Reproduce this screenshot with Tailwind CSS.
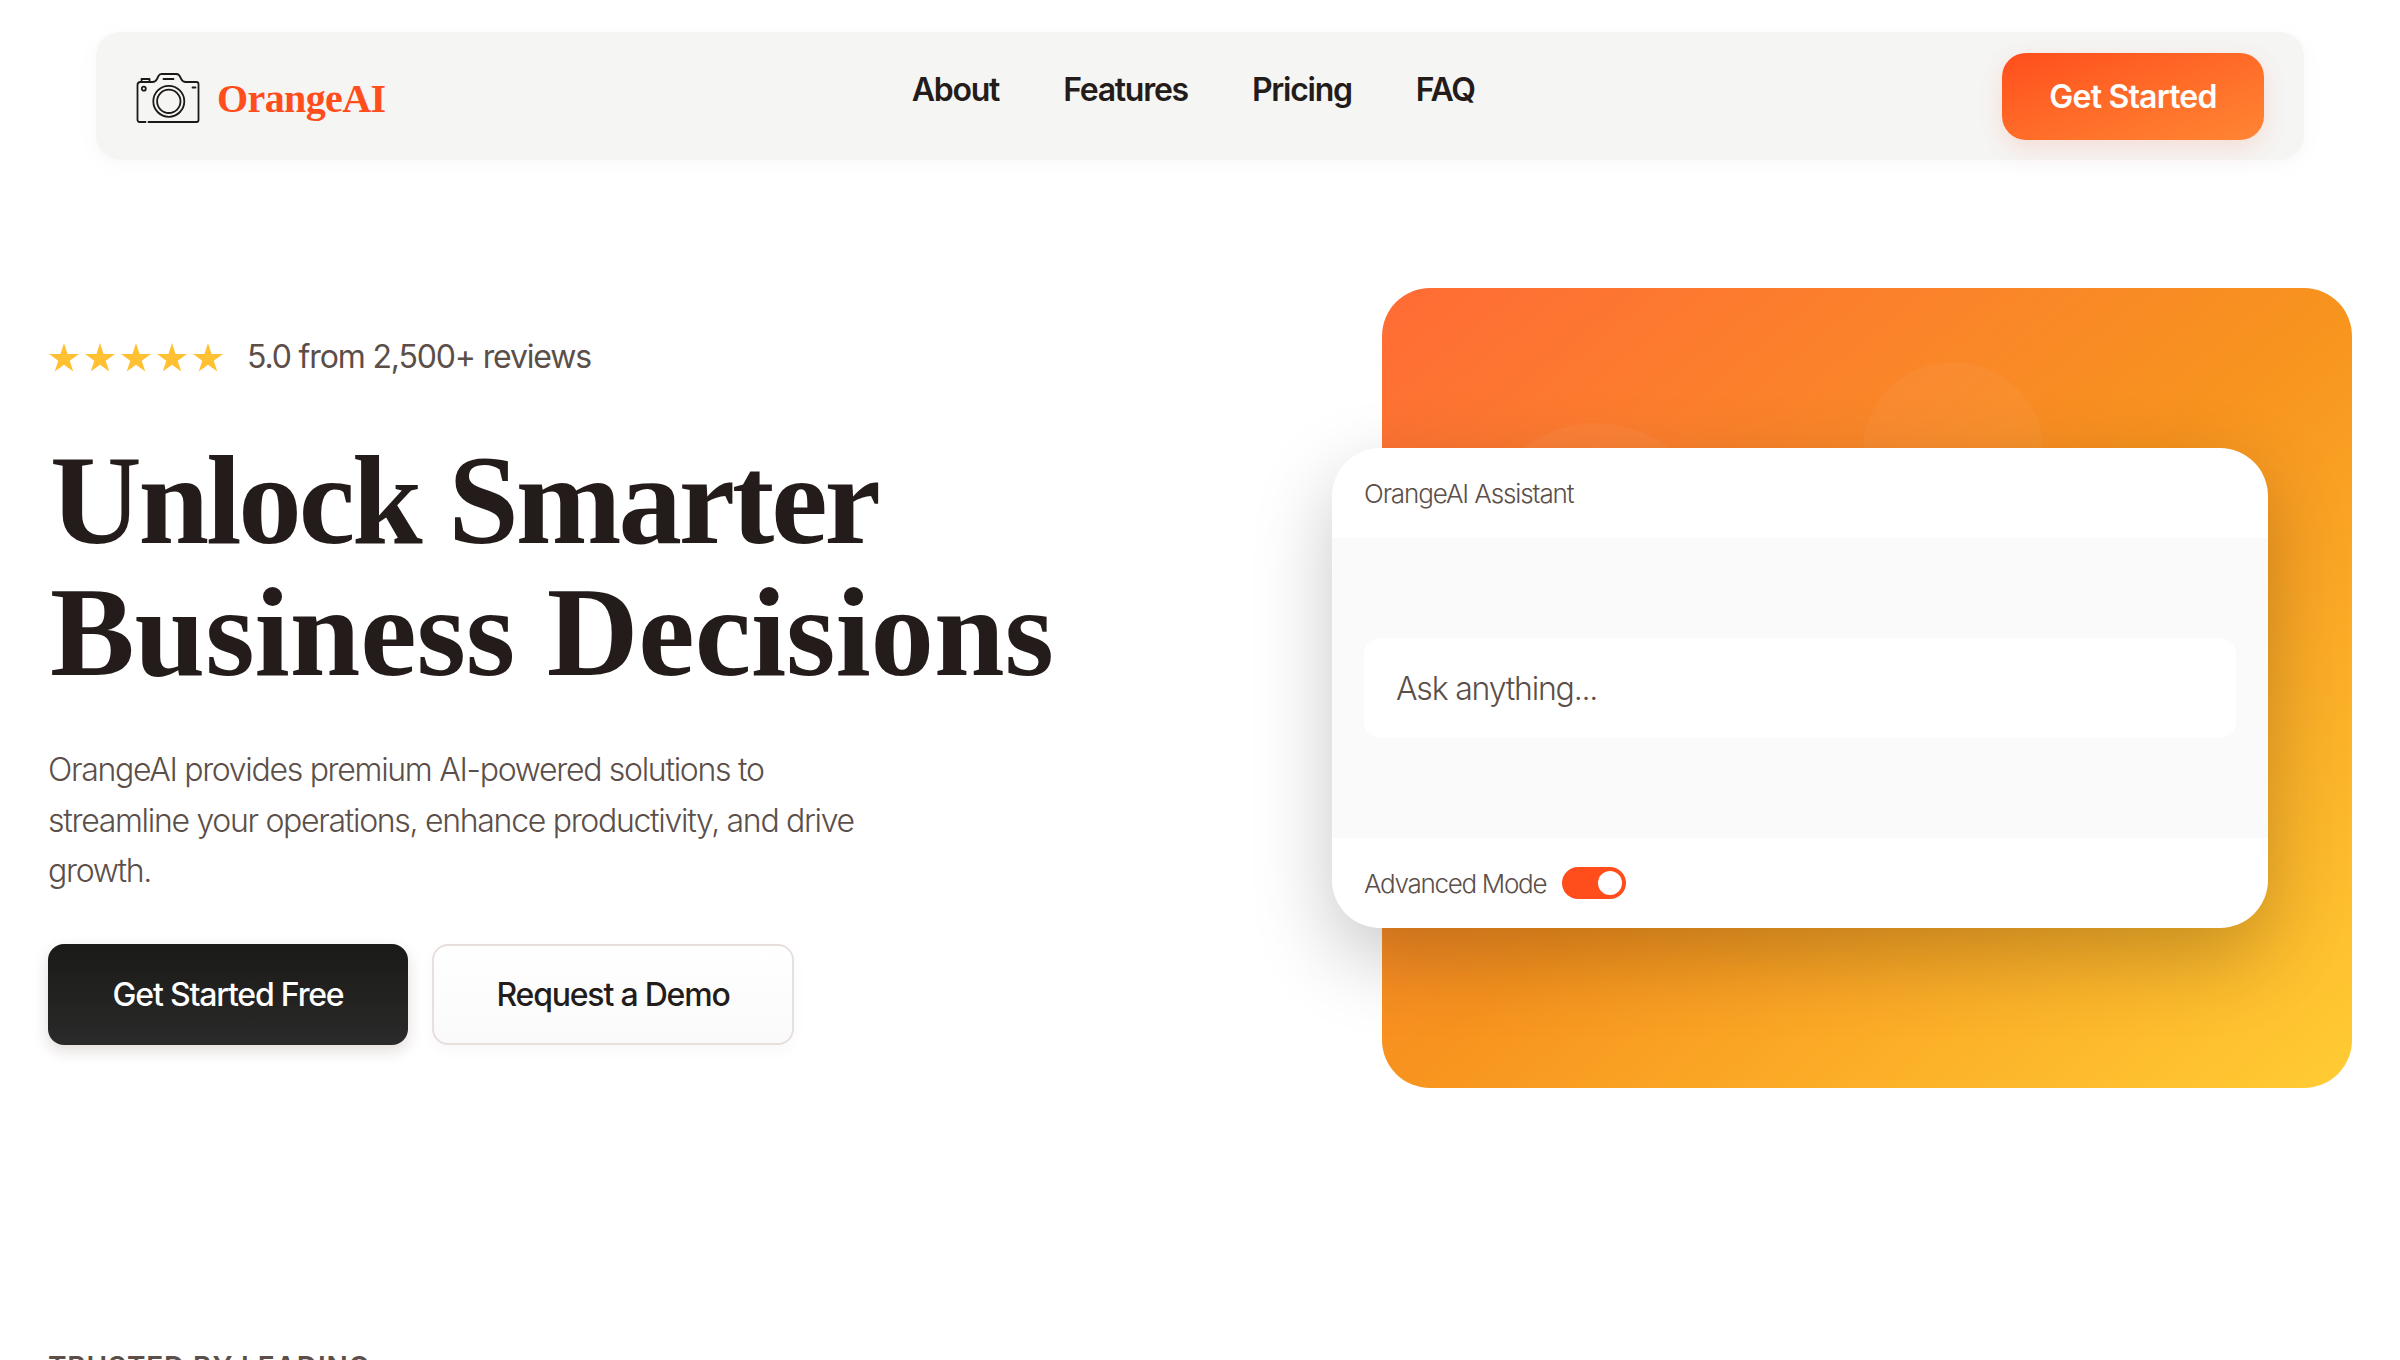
<!DOCTYPE html>
<html lang="en">
  <head>
    <meta charset="UTF-8" />
    <meta name="viewport" content="width=device-width, initial-scale=1.0" />
    <title>OrangeAI</title>
    <script src="https://cdn.jsdelivr.net/npm/@tailwindcss/browser@4"></script>
  </head>
  <body class="bg-white font-[Inter,sans-serif] text-[#231c1a] h-[1360px] overflow-hidden">
    <!-- Navbar -->
    <div class="pt-8 px-24">
      <nav class="h-[128px] bg-[#f5f5f4] rounded-3xl pl-10 pr-10 flex items-center justify-between shadow-[0_4px_24px_rgba(0,0,0,0.03)]">
        <a class="flex items-center gap-[17px] pt-[3px]">
          <svg class="w-[64px] h-[50px]" viewBox="0 0 63 50" fill="none" stroke="#1c1917" stroke-width="1.800" stroke-linecap="round" stroke-linejoin="round">
            <path d="M9 49H3a2 2 0 0 1-2-2V12a3 3 0 0 1 3-3h12c2 0 3.500-1 4.500-3l1.500-3c.5-1.200 1.500-2 3-2h15c1.500 0 2.500.8 3.200 2l1.500 3c1 2 2.500 3 4.500 3h10.800a2 2 0 0 1 2 2v36a2 2 0 0 1-2 2H12" />
            <path d="M5 9V6h8v3M27 6h10M56 14.500h3" />
            <circle cx="7.300" cy="15.700" r="2" />
            <circle cx="32.300" cy="28.300" r="15.500" />
            <circle cx="32.300" cy="28.300" r="11.700" />
          </svg>
          <span class="font-['Liberation_Serif',serif] font-bold text-[#ff4d1c] text-[40px] leading-none tracking-[-0.6px] pt-[2px]">OrangeAI</span>
        </a>
        <ul class="flex gap-16 text-[32px] leading-none font-semibold tracking-[-1.25px] text-[#231c1a] mb-[12px] mr-[1px]">
          <li>About</li>
          <li>Features</li>
          <li>Pricing</li>
          <li>FAQ</li>
        </ul>
        <button class="w-[262px] h-[87px] pt-[2px] rounded-3xl text-white text-[32px] font-semibold tracking-[-0.8px] bg-gradient-to-br from-[#ff4d1c] to-[#ff8533] shadow-[0_8px_24px_rgba(255,77,28,0.14)]">Get Started</button>
      </nav>
    </div>

    <!-- Hero -->
    <section class="flex justify-between pl-12 pr-12 pt-[128px]">
      <div class="pt-[54px] w-[1100px]">
        <div class="flex items-center gap-[24px] h-[30px]">
          <div class="flex gap-[6px] pl-[1px]">
            <svg class="w-[30px] h-[29px]" viewBox="0 0 30 29" fill="#ffc132"><polygon points="15,0 18.540,10.900 30,10.900 20.730,17.630 24.270,28.530 15,21.790 5.730,28.530 9.270,17.630 0,10.900 11.460,10.900" /></svg>
            <svg class="w-[30px] h-[29px]" viewBox="0 0 30 29" fill="#ffc132"><polygon points="15,0 18.540,10.900 30,10.900 20.730,17.630 24.270,28.530 15,21.790 5.730,28.530 9.270,17.630 0,10.900 11.460,10.900" /></svg>
            <svg class="w-[30px] h-[29px]" viewBox="0 0 30 29" fill="#ffc132"><polygon points="15,0 18.540,10.900 30,10.900 20.730,17.630 24.270,28.530 15,21.790 5.730,28.530 9.270,17.630 0,10.900 11.460,10.900" /></svg>
            <svg class="w-[30px] h-[29px]" viewBox="0 0 30 29" fill="#ffc132"><polygon points="15,0 18.540,10.900 30,10.900 20.730,17.630 24.270,28.530 15,21.790 5.730,28.530 9.270,17.630 0,10.900 11.460,10.900" /></svg>
            <svg class="w-[30px] h-[29px]" viewBox="0 0 30 29" fill="#ffc132"><polygon points="15,0 18.540,10.900 30,10.900 20.730,17.630 24.270,28.530 15,21.790 5.730,28.530 9.270,17.630 0,10.900 11.460,10.900" /></svg>
          </div>
          <span class="text-[32px] leading-none tracking-[-1.150px] text-[#5c4f4a]">5.0 from 2,500+ reviews</span>
        </div>
        <h1 class="mt-[62px] pl-[2px] font-['Liberation_Serif',serif] font-bold text-[127px] leading-[132px] text-[#231c1a] whitespace-nowrap">
          <span class="block tracking-[-3.100px]">Unlock Smarter</span>
          <span class="block tracking-[-0.1px]">Business Decisions</span>
        </h1>
        <p class="mt-[47px] w-[840px] text-[32px] font-[350] leading-[50.500px] tracking-[-1.3px] text-[#5c4f4a]">OrangeAI provides premium AI-powered solutions to streamline your operations, enhance productivity, and drive growth.</p>
        <div class="mt-[47px] flex gap-6">
          <button class="w-[360px] h-[101px] pt-[2px] rounded-2xl text-white text-[32px] font-medium tracking-[-1.2px] bg-gradient-to-b from-[#1a1a18] to-[#2b2a2a] shadow-[0_6px_16px_rgba(60,20,10,0.15)]">Get Started Free</button>
          <button class="w-[362px] h-[101px] pt-[2px] rounded-2xl border-2 border-[#e7dfdc] text-[#231c1a] text-[32px] font-medium tracking-[-1.2px] bg-gradient-to-b from-white to-[#fafafa] shadow-[0_6px_16px_rgba(0,0,0,0.03)]">Request a Demo</button>
        </div>
      </div>

      <!-- Panel with assistant card over it -->
      <div class="relative w-[970px] h-[800px] rounded-[48px] bg-gradient-to-br from-[#ff6b35] via-[#f7931e] to-[#ffcc33]">
        <div class="absolute left-[94px] top-[135px] w-[240px] h-[240px] rounded-full bg-white/[0.04]"></div>
        <div class="absolute left-[481px] top-[74px] w-[180px] h-[180px] rounded-full bg-white/[0.04]"></div>
        <div class="absolute left-[-50px] top-[160px] w-[936px] h-[480px] rounded-[48px] bg-white overflow-hidden shadow-[0_30px_80px_rgba(0,0,0,0.22)] flex flex-col">
          <div class="h-[90px] px-8 flex items-center text-[26px] tracking-[-1.1px] font-light text-[#5c4f4a]">OrangeAI Assistant</div>
          <div class="flex-1 bg-[#fafafa] px-8 flex items-center">
            <div class="w-full h-[100px] pt-[2px] rounded-2xl bg-white px-8 flex items-center text-[32px] tracking-[-1.2px] font-light text-[#5c4f4a]">Ask anything...</div>
          </div>
          <div class="h-[90px] px-8 flex items-center gap-4">
            <span class="text-[26px] tracking-[-1.3px] font-light text-[#5c4f4a]">Advanced Mode</span>
            <div class="w-16 h-8 rounded-full bg-[#ff4d1c] flex items-center justify-end pr-1">
              <div class="w-6 h-6 rounded-full bg-white"></div>
            </div>
          </div>
        </div>
      </div>
    </section>

    <!-- Trusted by -->
    <div class="pl-12 pt-[265px] text-[28px] leading-none font-semibold tracking-[0.85px] uppercase text-[#5c4f4a]">Trusted by leading</div>
  </body>
</html>
